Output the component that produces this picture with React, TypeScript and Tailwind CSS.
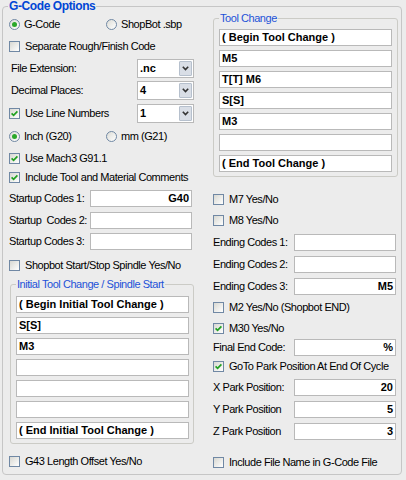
import React from 'react'

const FONT = "font-['Liberation_Sans',Arial,sans-serif]"

function Check({ checked = false, label }: { checked?: boolean; label: string }) {
  return (
    <div className="flex items-center">
      <span className="flex items-center justify-center w-[11px] h-[11px] border border-[#7088a4] bg-linear-to-br from-[#d8d8d2] to-white shrink-0">
        {checked && (
          <svg width="9" height="9" viewBox="0 0 9 9">
            <path d="M1.6 4.4 L3.6 6.4 L7.4 2.4" fill="none" stroke="#21a121" strokeWidth="1.7" />
          </svg>
        )}
      </span>
      <span className="ml-[5px] tracking-[-0.45px] whitespace-nowrap">{label}</span>
    </div>
  )
}

function Radio({ checked = false, label }: { checked?: boolean; label: string }) {
  return (
    <div className="flex items-center">
      <span className="flex items-center justify-center w-[11px] h-[11px] rounded-full border border-[#7088a4] bg-linear-to-br from-[#dcdcd6] to-white shrink-0">
        {checked && <span className="w-[5px] h-[5px] rounded-full bg-[#2aa82a]" />}
      </span>
      <span className="ml-[4px] tracking-[-0.45px] whitespace-nowrap">{label}</span>
    </div>
  )
}

function TextBox({ value = '', right = false, w = 'w-[173px]' }: { value?: string; right?: boolean; w?: string }) {
  return (
    <div
      className={`${w} h-[17px] border border-[#b9b9b9] bg-white px-[2px] font-bold text-[11px] leading-[15px] whitespace-pre ${
        right ? 'text-right' : 'text-left'
      }`}
    >
      {value}
    </div>
  )
}

function Select({ value }: { value: string }) {
  return (
    <div className="w-[57px] h-[19px] border border-[#b9b9b9] bg-white flex items-stretch">
      <span className="flex-1 pl-[2px] font-bold text-[11px] leading-[17px]">{value}</span>
      <span className="w-[13px] my-[1px] mr-[1px] flex items-center justify-center bg-[#d9dee6] border border-[#b6c0cd] rounded-[1px]">
        <svg width="7" height="5" viewBox="0 0 7 5">
          <path d="M0.8 0.8 L3.5 3.6 L6.2 0.8" fill="none" stroke="#333" strokeWidth="1.6" />
        </svg>
      </span>
    </div>
  )
}

function Group({ title, rows, className = '' }: { title: string; rows: string[]; className?: string }) {
  return (
    <fieldset className={`border border-[#cbcbc6] rounded-[3px] pl-[5px] pb-[4px] ${className}`}>
      <legend className="px-[1px] text-[11px] leading-[13px] text-[#1d52d8] tracking-[-0.45px]">{title}</legend>
      <div className="flex flex-col gap-[4px]">
        {rows.map((r, i) => (
          <TextBox key={i} value={r} />
        ))}
      </div>
    </fieldset>
  )
}

function LabelBox({ label, value, lw, right = true }: { label: string; value?: string; lw: string; right?: boolean }) {
  return (
    <div className="flex items-center">
      <span className={`${lw} tracking-[-0.45px] whitespace-pre`}>{label}</span>
      <TextBox value={value} right={right} w="w-[102px]" />
    </div>
  )
}

export default function App() {
  return (
    <div className={`w-[406px] h-[480px] bg-[#ececec] pl-[2px] text-[11px] leading-[13px] text-black ${FONT}`}>
      <fieldset className="w-[400px] h-[475px] border border-[#c6c6c6] rounded-[4px] pl-[5px] pr-[3px]">
        <legend className="px-[1px] text-[12px] leading-[12px] font-bold text-[#0046d5] tracking-[-0.4px]">
          G-Code Options
        </legend>
        <div className="flex gap-[18px]">
          {/* left column */}
          <div className="w-[187px] pt-[1px] flex flex-col">
            <div className="h-[22px] flex items-center pl-[1px]">
              <div className="w-[97px]">
                <Radio checked label="G-Code" />
              </div>
              <Radio label="ShopBot .sbp" />
            </div>
            <div className="h-[22px] flex items-center pl-[1px]">
              <Check label="Separate Rough/Finish Code" />
            </div>
            <div className="h-[22px] flex items-center">
              <span className="w-[129px] pl-[3px] tracking-[-0.45px]">File Extension:</span>
              <Select value=".nc" />
            </div>
            <div className="h-[23px] flex items-center">
              <span className="w-[129px] pl-[3px] tracking-[-0.45px]">Decimal Places:</span>
              <Select value="4" />
            </div>
            <div className="h-[23px] flex items-center">
              <div className="w-[129px] pl-[1px]">
                <Check checked label="Use Line Numbers" />
              </div>
              <Select value="1" />
            </div>
            <div className="h-[22px] flex items-center pl-[1px]">
              <div className="w-[97px]">
                <Radio checked label="Inch (G20)" />
              </div>
              <Radio label="mm (G21)" />
            </div>
            <div className="h-[22px] flex items-center pl-[1px]">
              <Check checked label="Use Mach3 G91.1" />
            </div>
            <div className="h-[17px] flex items-center pl-[1px]">
              <Check checked label="Include Tool and Material Comments" />
            </div>
            <div className="h-[24px] flex items-center pl-[1px]">
              <LabelBox lw="w-[81px]" label="Startup Codes 1:" value="G40" />
            </div>
            <div className="h-[21px] flex items-center pl-[1px]">
              <LabelBox lw="w-[81px]" label="Startup  Codes 2:" />
            </div>
            <div className="h-[21px] flex items-center pl-[1px]">
              <LabelBox lw="w-[81px]" label="Startup Codes 3:" />
            </div>
            <div className="h-[26px] flex items-center pl-[1px]">
              <Check label="Shopbot Start/Stop Spindle Yes/No" />
            </div>
            <Group
              className="ml-[2px] w-[184px] pt-[5px]"
              title="Initial Tool Change / Spindle Start"
              rows={['( Begin Initial Tool Change )', 'S[S]', 'M3', '', '', '', '( End Initial Tool Change )']}
            />
            <div className="mt-[6px] h-[22px] flex items-center pl-[1px]">
              <Check label="G43 Length Offset Yes/No" />
            </div>
          </div>

          {/* right column */}
          <div className="w-[185px] flex flex-col">
            <Group
              className="w-[185px] pt-[4px]"
              title="Tool Change"
              rows={['( Begin Tool Change )', 'M5', 'T[T] M6', 'S[S]', 'M3', '', '( End Tool Change )']}
            />
            <div className="mt-[11px] h-[22px] flex items-center">
              <Check label="M7 Yes/No" />
            </div>
            <div className="h-[21px] flex items-center">
              <Check label="M8 Yes/No" />
            </div>
            <div className="h-[22px] flex items-center">
              <LabelBox lw="w-[81px]" label="Ending Codes 1:" />
            </div>
            <div className="h-[22px] flex items-center">
              <LabelBox lw="w-[81px]" label="Ending Codes 2:" />
            </div>
            <div className="h-[22px] flex items-center">
              <LabelBox lw="w-[81px]" label="Ending Codes 3:" value="M5" />
            </div>
            <div className="h-[21px] flex items-center">
              <Check label="M2 Yes/No (Shopbot END)" />
            </div>
            <div className="h-[20px] flex items-center">
              <Check checked label="M30 Yes/No" />
            </div>
            <div className="h-[18px] flex items-center">
              <LabelBox lw="w-[81px]" label="Final End Code:" value="%" />
            </div>
            <div className="h-[20px] flex items-center">
              <Check checked label="GoTo Park Position At End Of Cycle" />
            </div>
            <div className="h-[22px] flex items-center">
              <LabelBox lw="w-[81px]" label="X Park Position:" value="20" />
            </div>
            <div className="h-[22px] flex items-center">
              <LabelBox lw="w-[81px]" label="Y Park Position" value="5" />
            </div>
            <div className="h-[22px] flex items-center">
              <LabelBox lw="w-[81px]" label="Z Park Position" value="3" />
            </div>
            <div className="mt-[9px] h-[22px] flex items-center">
              <Check label="Include File Name in G-Code File" />
            </div>
          </div>
        </div>
      </fieldset>
    </div>
  )
}
